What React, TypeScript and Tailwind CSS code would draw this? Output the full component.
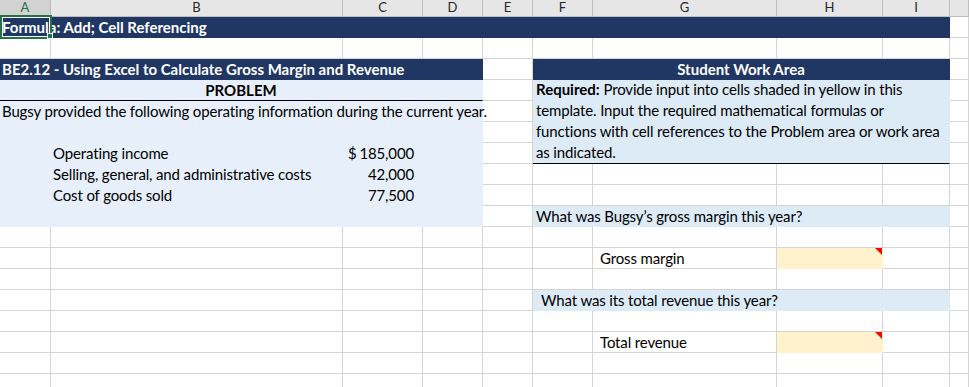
import { ReactNode } from "react";
import clsx from "clsx";

const NAVY = "bg-[#203764]";
const LB = "bg-[#e7f0fa]";
const QB = "bg-[#ddebf7]";
const YEL = "bg-[#fff2cc]";

function Cell({
  span,
  fill,
  className,
  children,
}: {
  span?: string;
  fill?: string;
  className?: string;
  children?: ReactNode;
}) {
  return (
    <div
      className={clsx(
        "relative whitespace-nowrap border-r border-b leading-[20px]",
        fill ? `border-transparent ${fill}` : "border-[#d4d4d4]",
        span,
        className
      )}
    >
      {children}
    </div>
  );
}

function Blanks({ n }: { n: number }) {
  return (
    <>
      {Array.from({ length: n }).map((_, i) => (
        <Cell key={i} />
      ))}
    </>
  );
}

// yellow input cell with the red comment marker
function InputCell() {
  return (
    <Cell fill={YEL}>
      <span className="absolute right-0 top-0 h-0 w-0 border-l-[7px] border-t-[7px] border-l-transparent border-t-[#ff0000]" />
    </Cell>
  );
}

const letters = ["A", "B", "C", "D", "E", "F", "G", "H", "I", ""];

export default function App() {
  return (
    <div className="relative h-[387px] w-[969px] overflow-hidden bg-white font-['Lato',sans-serif] text-[15px] tracking-[-0.14px] text-black">
      <div className="grid grid-cols-[51px_292px_80px_60px_50px_60px_184px_106px_67px_1fr] grid-rows-[17px_repeat(18,21px)]">
        {/* column headers */}
        {letters.map((l, i) => (
          <div
            key={i}
            className={clsx(
              "border-r text-center text-[13px] leading-[15px] tracking-normal",
              i === 0
                ? "border-b-2 border-r-[#bdbdbd] border-b-[#217346] bg-[#d2d2d2] text-[#217346]"
                : "border-b border-[#bdbdbd] bg-[#e6e6e6] text-[#262626]"
            )}
          >
            {l}
          </div>
        ))}

        {/* row 1 */}
        <Cell span="col-span-9" fill={NAVY} className="pl-[2px] font-bold tracking-normal text-white">
          Formula: Add; Cell Referencing
        </Cell>
        <Cell />

        {/* row 2 */}
        <Blanks n={10} />

        {/* row 3 */}
        <Cell span="col-span-4" fill={NAVY} className="pl-[2px] font-bold tracking-normal text-white">
          BE2.12 - Using Excel to Calculate Gross Margin and Revenue
        </Cell>
        <Cell />
        <Cell span="col-span-4" fill={NAVY} className="text-center font-bold tracking-normal text-white">
          Student Work Area
        </Cell>
        <Cell />

        {/* row 4 */}
        <Cell span="col-span-4" fill={LB} className="!border-b-black text-center font-bold tracking-normal">
          PROBLEM
        </Cell>
        <Cell />
        <Cell span="col-span-4 row-span-4" fill={QB} className="!border-b-black pl-[3px]">
          <div className="-mt-px leading-[21px]">
            <div>
              <b className="tracking-normal">Required:</b> Provide input into cells shaded in yellow in this
            </div>
            <div>template. Input the required mathematical formulas or</div>
            <div>functions with cell references to the Problem area or work area</div>
            <div>as indicated.</div>
          </div>
        </Cell>
        <Cell />

        {/* row 5 */}
        <Cell span="col-span-4" fill={LB} className="pl-[2px]">
          Bugsy provided the following operating information during the current year.
        </Cell>
        <Cell />
        <Cell />

        {/* row 6 */}
        <Cell span="col-span-4" fill={LB} />
        <Cell />
        <Cell />

        {/* row 7 */}
        <Cell fill={LB} />
        <Cell fill={LB} className="pl-[2px]">
          Operating income
        </Cell>
        <Cell fill={LB} className="flex justify-between pl-[5px] pr-[8px]">
          <span>$</span>
          <span>185,000</span>
        </Cell>
        <Cell fill={LB} />
        <Cell />
        <Cell />

        {/* row 8 */}
        <Cell fill={LB} />
        <Cell fill={LB} className="pl-[2px]">
          Selling, general, and administrative costs
        </Cell>
        <Cell fill={LB} className="pr-[8px] text-right">
          42,000
        </Cell>
        <Cell fill={LB} />
        <Blanks n={6} />

        {/* row 9 */}
        <Cell fill={LB} />
        <Cell fill={LB} className="pl-[2px]">
          Cost of goods sold
        </Cell>
        <Cell fill={LB} className="pr-[8px] text-right">
          77,500
        </Cell>
        <Cell fill={LB} />
        <Blanks n={6} />

        {/* row 10 */}
        <Cell span="col-span-4" fill={LB} />
        <Cell />
        <Cell span="col-span-4" fill={QB} className="pl-[3px]">
          What was Bugsy’s gross margin this year?
        </Cell>
        <Cell />

        {/* row 11 */}
        <Blanks n={10} />

        {/* row 12 */}
        <Blanks n={6} />
        <Cell className="pl-[7px]">Gross margin</Cell>
        <InputCell />
        <Blanks n={2} />

        {/* row 13 */}
        <Blanks n={10} />

        {/* row 14 */}
        <Blanks n={5} />
        <Cell span="col-span-4" fill={QB} className="pl-[8px]">
          What was its total revenue this year?
        </Cell>
        <Cell />

        {/* row 15 */}
        <Blanks n={10} />

        {/* row 16 */}
        <Blanks n={6} />
        <Cell className="pl-[7px]">Total revenue</Cell>
        <InputCell />
        <Blanks n={2} />

        {/* rows 17-18 */}
        <Blanks n={20} />
      </div>

      {/* active cell A1 */}
      <div className="absolute left-0 top-[15px] h-[24px] w-[52px] border-2 border-[#217346]">
        <div className="h-full w-full border border-white" />
      </div>
      <div className="absolute left-[47px] top-[33px] h-[6px] w-[6px] border border-white bg-[#217346]" />
    </div>
  );
}
